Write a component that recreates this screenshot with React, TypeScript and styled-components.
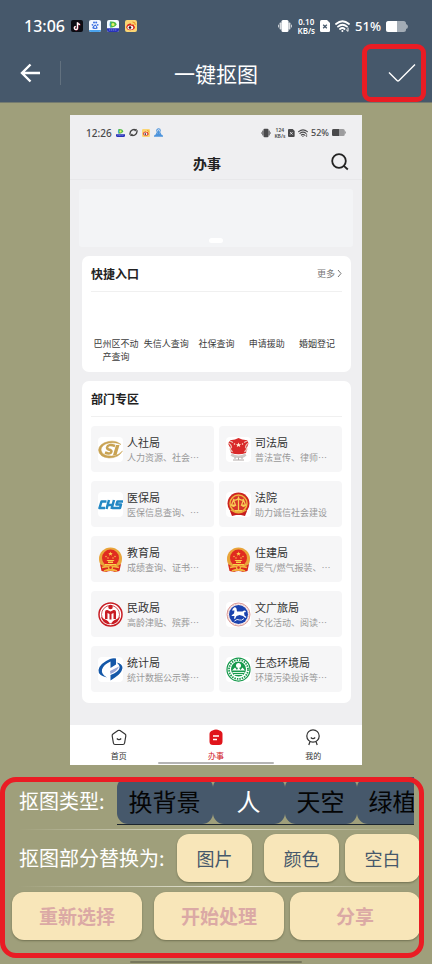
import React from "react";
import styled, { createGlobalStyle } from "styled-components";

const slate = "#46586b";
const olive = "#9f9f7b";
const cream = "#f8e6b9";
const red = "#ea1c24";

const GlobalStyle = createGlobalStyle`
  *, *::before, *::after { box-sizing: border-box; }
  body {
    margin: 0;
    background: ${olive};
    font-family: "Noto Sans CJK SC", "Noto Sans", sans-serif;
  }
  h1, h2, h3, p, ul { margin: 0; padding: 0; }
  ul { list-style: none; }
  button { font-family: inherit; border: 0; padding: 0; margin: 0; background: none; cursor: pointer; }
  svg { display: block; flex: none; }
`;

const Page = styled.div`
  min-height: 100vh;
  display: flex;
  flex-direction: column;
  background: ${olive};
  overflow: hidden;
`;

/* ---------- app header ---------- */

const Header = styled.header`
  background: ${slate};
  color: #fff;
  border-bottom: 1px solid #747b70;
`;

const StatusBar = styled.div`
  height: 44px;
  padding: 8px 24px 0 24px;
  display: flex;
  align-items: center;
  justify-content: space-between;
`;

const StatusGroup = styled.div<{ $gap: number }>`
  display: flex;
  align-items: center;
  gap: ${(p) => p.$gap}px;
`;

const Clock = styled.span<{ $small?: boolean }>`
  font-family: "Noto Sans", sans-serif;
  font-size: ${(p) => (p.$small ? 10 : 16)}px;
  line-height: ${(p) => (p.$small ? 12 : 20)}px;
  font-weight: 500;
`;

const Rate = styled.span<{ $small?: boolean }>`
  font-family: "Noto Sans", sans-serif;
  font-size: ${(p) => (p.$small ? 5 : 8)}px;
  line-height: ${(p) => (p.$small ? 6 : 9)}px;
  font-weight: 600;
  text-align: center;
  display: flex;
  flex-direction: column;
`;

const Percent = styled.span<{ $small?: boolean }>`
  font-family: "Noto Sans", sans-serif;
  font-size: ${(p) => (p.$small ? 9 : 13)}px;
  line-height: ${(p) => (p.$small ? 12 : 20)}px;
  font-weight: 500;
`;

const Toolbar = styled.div`
  height: 58px;
  display: grid;
  grid-template-columns: 61px 1fr 61px;
  align-items: center;
`;

const BackButton = styled.button`
  height: 24px;
  padding-left: 20px;
  color: #fff;
  border-right: 1px solid #62717f;
`;

const AppTitle = styled.h1`
  font-size: 21px;
  line-height: 30px;
  font-weight: 400;
  text-align: center;
`;

const Confirm = styled.div`
  position: relative;
  height: 58px;
  display: flex;
  align-items: center;
  justify-content: center;
`;

const ConfirmButton = styled.button`
  color: #fff;
`;

const ConfirmRing = styled.span`
  position: absolute;
  inset: 0 6px 0 -9px;
  border: 5px solid ${red};
  border-radius: 9px;
  pointer-events: none;
`;

/* ---------- picture being edited ---------- */

const Stage = styled.main`
  padding: 12px 70px;
`;

const Phone = styled.section`
  background: #efeff1;
  color: #222;
  display: flex;
  flex-direction: column;
`;

const PhoneStatus = styled.div`
  height: 35px;
  padding: 0 16px;
  display: flex;
  align-items: center;
  justify-content: space-between;
  color: #4a4a4c;
`;

const PhoneHeader = styled.div`
  height: 30px;
  padding: 0 11px;
  display: grid;
  grid-template-columns: 20px 1fr 20px;
  align-items: start;
  border-bottom: 1px solid #e8e8ea;
`;

const PhoneTitle = styled.h2`
  grid-column: 2;
  padding-right: 18px;
  font-size: 14px;
  line-height: 26px;
  font-weight: 700;
  text-align: center;
`;

const SearchButton = styled.button`
  color: #222;
`;

const Banner = styled.div`
  height: 58px;
  margin: 9px 9px 0;
  padding-bottom: 4px;
  border-radius: 3px;
  background: #f3f4f6;
  display: flex;
  align-items: flex-end;
  justify-content: center;
`;

const BannerDot = styled.span`
  width: 14px;
  height: 5px;
  border-radius: 3px;
  background: #fff;
`;

const Card = styled.section`
  margin: 9px 11px 0 12px;
  padding: 0 9px;
  border-radius: 7px;
  background: #fff;
`;

const CardHead = styled.div`
  height: 36px;
  display: flex;
  align-items: center;
  justify-content: space-between;
  border-bottom: 1px solid #f0f0f0;
`;

const CardTitle = styled.h3`
  font-size: 12px;
  line-height: 18px;
  font-weight: 700;
`;

const More = styled.a`
  display: flex;
  align-items: center;
  gap: 2px;
  font-size: 9px;
  line-height: 14px;
  color: #777;
  text-decoration: none;
`;

const Shortcuts = styled.ul`
  display: grid;
  grid-template-columns: repeat(5, 1fr);
  padding: 45px 0 9px;
  font-size: 9px;
  line-height: 13px;
  color: #3c3c3c;
  text-align: center;
`;

const Departments = styled.ul`
  display: grid;
  grid-template-columns: 1fr 1fr;
  gap: 9px 5px;
  padding: 9px 0 11px;
`;

const Department = styled.li`
  height: 46px;
  padding: 0 7px;
  border-radius: 4px;
  background: #f6f6f7;
  display: flex;
  align-items: center;
  gap: 4px;
  overflow: hidden;
  white-space: nowrap;
`;

const DepartmentName = styled.p`
  font-size: 11px;
  line-height: 16px;
  color: #333;
`;

const DepartmentNote = styled.p`
  font-size: 9px;
  line-height: 15px;
  color: #999;
`;

const TabBar = styled.nav`
  margin-top: 22px;
  padding-top: 4px;
  background: #fff;
  display: grid;
  grid-template-columns: repeat(3, 1fr);
`;

const TabItem = styled.button<{ $active?: boolean }>`
  display: flex;
  flex-direction: column;
  align-items: center;
  gap: 4px;
  font-size: 8px;
  line-height: 11px;
  color: ${(p) => (p.$active ? "#d0161c" : "#333")};
`;

const PhoneFoot = styled.div`
  padding: 1px 0;
  background: #fff;
  display: flex;
  justify-content: center;
`;

const HomeBar = styled.span<{ $tone: string }>`
  width: 40%;
  height: 2px;
  border-radius: 1px;
  background: ${(p) => p.$tone};
`;

/* ---------- bottom controls ---------- */

const Panel = styled.section`
  position: relative;
  padding-bottom: 18px;
`;

const PanelRing = styled.span`
  position: absolute;
  inset: 0 8px 0 0;
  border: 5px solid ${red};
  border-radius: 16px;
  pointer-events: none;
`;

const TypeRow = styled.div`
  display: flex;
  align-items: center;
  padding: 0 18px 0 19px;
`;

const RowLabel = styled.span`
  flex: none;
  font-size: 20px;
  line-height: 30px;
  color: #fff;
`;

const TypeTabs = styled.div`
  flex: 1;
  min-width: 0;
  margin-left: 12px;
  display: flex;
  overflow: hidden;
  border-bottom: 1px solid #1c252e;
`;

const TypeTab = styled.button<{ $active?: boolean }>`
  flex: none;
  min-width: 72px;
  height: 47px;
  padding: 0 12px;
  border-radius: 11px;
  background: ${slate};
  font-size: 24px;
  line-height: 36px;
  color: ${(p) => (p.$active ? "#fff" : "#050505")};
`;

const Rule = styled.hr`
  width: calc(100% - 36px);
  height: 1px;
  margin: 4px 18px;
  border: 0;
  background: linear-gradient(90deg, transparent, #e4e4d4 50%, transparent);
`;

const ReplaceRow = styled.div`
  display: flex;
  align-items: center;
  padding: 0 12px 0 19px;

  ${RowLabel} { flex: 1; }
`;

const CreamButton = styled.button`
  width: 75px;
  height: 48px;
  margin-left: 12px;
  border-radius: 12px;
  background: ${cream};
  box-shadow: 0 1px 2px rgba(60, 60, 30, 0.45);
  font-size: 18px;
  line-height: 28px;
  color: ${slate};

  &:last-child { margin-left: 6px; }
`;

const ActionRow = styled.div`
  display: flex;
  margin-top: 5px;
  padding: 0 12px 0 0;
`;

const ActionButton = styled(CreamButton)`
  flex: 1;
  font-size: 19px;
  font-weight: 700;
  color: #dba9a5;
`;

const PageFoot = styled.div`
  padding-top: 3px;
  display: flex;
  justify-content: center;
`;

/* ---------- status icons ---------- */

const Vibrate = ({ w }: { w: number }) => (
  <svg width={w} height={w} viewBox="0 0 14 14" fill="currentColor">
    <rect x="3.500" y="1" width="7" height="12" rx="1.500" />
    <rect x="1.600" y="3.600" width="1.900" height="6.800" rx=".6" opacity=".8" />
    <rect x="10.500" y="3.600" width="1.900" height="6.800" rx=".6" opacity=".8" />
    <rect x="0" y="5.500" width="1" height="3" rx=".5" opacity=".7" />
    <rect x="13" y="5.500" width="1" height="3" rx=".5" opacity=".7" />
  </svg>
);

const Sim = ({ h, cut }: { h: number; cut: string }) => (
  <svg width={(h * 10) / 12} height={h} viewBox="0 0 10 12">
    <path d="M1.500 0H7L10 3V10.500Q10 12 8.500 12H1.500Q0 12 0 10.500V1.500Q0 0 1.500 0Z" fill="currentColor" />
    <path d="M3.200 4.700L6.800 8.300M6.800 4.700L3.200 8.300" stroke={cut} strokeWidth="1.300" />
  </svg>
);

const Wifi = ({ w }: { w: number }) => (
  <svg width={w} height={(w * 12) / 15} viewBox="0 0 15 12" fill="none" stroke="currentColor" strokeWidth="1.800" strokeLinecap="round">
    <path d="M1 4Q7.500 -1.600 14 4M3 6.600Q7.500 2.900 12 6.600M5 9Q7.500 7 9.600 9" />
    <circle cx="7.400" cy="11" r="1" fill="currentColor" stroke="none" />
    <path d="M13 8V11M11.400 10L12.600 11" strokeWidth="1" />
  </svg>
);

const Battery = ({ w }: { w: number }) => (
  <svg width={w} height={w / 2} viewBox="0 0 22 11">
    <rect width="20" height="11" rx="2.500" fill="currentColor" opacity=".5" />
    <path d="M2.500 0H11V11H2.500Q0 11 0 8.500V2.500Q0 0 2.500 0Z" fill="currentColor" />
    <path d="M20 3Q22 3.500 22 5.500T20 8Z" fill="currentColor" opacity=".5" />
  </svg>
);

const NoteApp = () => (
  <svg width="12" height="12" viewBox="0 0 12 12">
    <rect width="12" height="12" rx="2" fill="#0b0b12" />
    <path d="M6.400 2.200V7.900A1.600 1.600 0 1 1 4.700 6.300M6.400 2.400Q7 4.300 9 4.500" fill="none" stroke="#ef4a6a" strokeWidth="1.300" transform="translate(.4 .3)" />
    <path d="M6.400 2.200V7.900A1.600 1.600 0 1 1 4.700 6.300M6.400 2.400Q7 4.300 9 4.500" fill="none" stroke="#fff" strokeWidth="1.300" />
  </svg>
);

const PawApp = () => (
  <svg width="12" height="12" viewBox="0 0 12 12">
    <rect width="12" height="12" rx="2" fill="#f2f7ff" />
    <g fill="#3c6fe0">
      <circle cx="3.500" cy="4.800" r=".9" />
      <circle cx="5" cy="2.600" r="1" />
      <circle cx="7.200" cy="2.600" r="1" />
      <circle cx="8.700" cy="4.800" r=".9" />
      <path d="M6 4.500Q7 4.500 7.700 5.900T8.800 8Q8.500 9 6 9T3.300 8Q3.400 7 4.300 6T6 4.500Z" />
    </g>
    <circle cx="6.100" cy="7" r="1" fill="#fff" />
    <path d="M0 10H12Q12 12 10 12H2Q0 12 0 10Z" fill="#4aa3ee" />
  </svg>
);

const PlayApp = ({ w, bare }: { w: number; bare?: boolean }) => (
  <svg width={w} height={w} viewBox="0 0 12 12">
    {!bare && <rect width="12" height="12" rx="2" fill="#f5fbff" />}
    <path d="M3 1.500Q9 1 9.500 4.200Q9.200 7 3.300 7.800Z" fill="#4dba45" />
    <path d="M3 1.500Q4.500 4 3.300 7.800Q2 5 3 1.500Z" fill="#1c9be8" />
    <circle cx="6" cy="4.500" r="1.500" fill="#e8f06a" />
    <path d="M0 8.300H12V10Q12 12 10 12H2Q0 12 0 10Z" fill="#2832b8" />
    <path d="M2 10H10" stroke="#8c9cf0" strokeWidth=".8" strokeDasharray="1.300 .6" />
  </svg>
);

const EyeApp = ({ w }: { w: number }) => (
  <svg width={w} height={w} viewBox="0 0 12 12">
    <rect width="12" height="12" rx="2" fill="#fbd573" />
    <path d="M1.200 7.200Q2 4 5 3.600Q6.500 3.500 6.300 4.700Q9.500 4 9 6Q10.500 6.600 9.800 8.200Q8.500 10.200 5.200 10.200T1.200 7.200Z" fill="#d8261c" />
    <ellipse cx="5.300" cy="7.400" rx="2.900" ry="2" fill="#fff" />
    <circle cx="5" cy="7.500" r="1.300" fill="#1b1210" />
    <path d="M7.500 2Q10.500 1.800 10.300 5" fill="none" stroke="#f08a1c" strokeWidth="1" />
  </svg>
);

const LoopApp = () => (
  <svg width="9" height="9" viewBox="0 0 12 12" fill="none" stroke="#444" strokeWidth="1.800">
    <path d="M1.500 9Q.5 4.500 4.500 2.500Q7 1.500 8.500 2.500M10.500 3Q11.500 7.500 7.500 9.500Q5 10.500 3.500 9.500M2 10.500L4.500 8M10 1.500L7.500 4" />
  </svg>
);

const CloudApp = () => (
  <svg width="9" height="9" viewBox="0 0 12 12" fill="none" stroke="#4d94dc" strokeWidth="1.400">
    <circle cx="6" cy="3.400" r="2.400" />
    <path d="M4 6.500H8L9 8.500H3ZM6 3V8M.5 10.800Q2 8.800 3.500 9.500H8.500Q10 8.800 11.500 10.800Z" />
  </svg>
);

/* ---------- department emblems ---------- */

const Emblem = ({ children, plain }: { children: React.ReactNode; plain?: boolean }) => (
  <svg width="25" height="25" viewBox="0 0 50 50">
    {!plain && <rect width="50" height="50" rx="8" fill="#fff" />}
    {children}
  </svg>
);

const SocialSecurity = () => (
  <Emblem>
    <path d="M46 15Q36 6 21 9Q2 13 1 26Q2 40 22 42Q41 42 49 28Q42 37 27 38Q8 38 6 26Q7 15 22 12Q37 10 46 15Z" fill="#c9a353" stroke="#c9a353" />
    <path d="M34 18Q20 13 18 21Q18 25 25 26Q29 28 25 32Q21 34 14 31" fill="none" stroke="#c9a353" strokeWidth="5" />
    <path d="M36 16H43L37 36H30Z" fill="#c9a353" />
  </Emblem>
);

const HealthInsurance = () => (
  <Emblem>
    <g fill="none" stroke="#2388c4" strokeWidth="5" strokeLinejoin="round">
      <path d="M17 19H7L3 32H14M22 16L17 34M32 16L27 34M19 26H30M50 19H39L37 25H46L44 32H29" />
    </g>
  </Emblem>
);

const Justice = () => (
  <Emblem>
    <path d="M9 6Q16 7 25 2Q34 7 42 6L45 13L42 21L40 32Q25 37 10 32L8 21L4 13Z" fill="#d92a2a" />
    <path d="M4 12Q10 14 11 20L8 24L13 30M46 12Q40 14 39 20L42 24L37 30M8 8L14 11M42 8L36 11" fill="none" stroke="#edc3b8" strokeWidth="2.500" />
    <path d="M25 11L26.500 14.500H30L27.500 17L28.500 20L25 18L21.500 20L22.500 17L20 14.500H23.500Z" fill="#fff0d8" />
    <circle cx="17" cy="14" r="1.500" fill="#fff0d8" />
    <circle cx="33" cy="14" r="1.500" fill="#fff0d8" />
    <path d="M12 33Q18 37 25 37T38 33L41 37Q36 43 25 42T9 37Z" fill="#cfc9c6" />
    <path d="M14 46H36M18 40V44M25 41V46M32 40V44" stroke="#b1aaa8" strokeWidth="2" />
  </Emblem>
);

const Court = () => (
  <Emblem>
    <path d="M8 38L12 48L20 46H30L38 48L42 38Z" fill="#c51c1e" />
    <circle cx="25" cy="23" r="22" fill="#cc2420" />
    <circle cx="25" cy="23" r="17" fill="#d7352a" stroke="#f0b541" strokeWidth="3" />
    <path d="M25 9V36M14 15Q20 18 25 13Q30 18 36 15M15 16L11 26H19ZM35 16L31 26H39ZM18 37H32" fill="none" stroke="#f7cd56" strokeWidth="2.500" />
    <path d="M10 26H20Q18 30 15 30T10 26ZM30 26H40Q38 30 35 30T30 26Z" fill="#f7cd56" />
    <path d="M10 36Q25 47 40 36" fill="none" stroke="#e9ad3c" strokeWidth="2.500" />
  </Emblem>
);

const National = () => (
  <Emblem plain>
    <circle cx="25" cy="24" r="23" fill="#e9a53a" />
    <circle cx="25" cy="22" r="17" fill="#e02b20" />
    <path d="M25 9L26 12H29.500L27 14L28 17.500L25 15.500L22 17.500L23 14L20.500 12H24Z" fill="#fbd24c" />
    <g fill="#fbd24c">
      <circle cx="16" cy="19" r="1.400" />
      <circle cx="20" cy="22" r="1.300" />
      <circle cx="30" cy="22" r="1.300" />
      <circle cx="34" cy="19" r="1.400" />
      <path d="M19 26H31L33 28H17ZM20 29H30V32H20ZM14 34H36V36H14Z" />
    </g>
    <path d="M4 34Q12 41 25 37Q38 41 46 34L43 48L34 50Q25 46 16 50L7 48Z" fill="#d9291d" />
    <path d="M8 41Q25 36 42 41M12 48Q25 43 38 48" fill="none" stroke="#f3b33e" strokeWidth="3.500" />
    <circle cx="25" cy="41" r="4" fill="#e02b20" stroke="#f3b33e" strokeWidth="2.500" />
  </Emblem>
);

const CivilAffairs = () => (
  <Emblem plain>
    <circle cx="25" cy="25" r="23" fill="#fff" stroke="#c81d24" strokeWidth="3" />
    <circle cx="25" cy="25" r="18" fill="#fff" stroke="#c81d24" strokeWidth="1.500" />
    <circle cx="25" cy="10" r="4.500" fill="#c81d24" />
    <path d="M14 34V20Q14 15 19 16L25 19L31 16Q36 15 36 20V34H31V22L27 24V35H23V24L19 22V34Z" fill="#c81d24" />
    <path d="M6 29Q8 42 23 45Q23 37 12 34ZM44 29Q42 42 27 45Q27 37 38 34Z" fill="#c81d24" />
  </Emblem>
);

const Tourism = () => (
  <Emblem>
    <circle cx="25" cy="25" r="23" fill="#fff4f1" stroke="#d99a98" strokeWidth="2" />
    <circle cx="25" cy="25" r="21" fill="none" stroke="#dfaaa7" strokeWidth="2" strokeDasharray="1.500 2" />
    <circle cx="25" cy="25" r="19" fill="#1b43ae" />
    <path d="M12 17Q13 12 18 10L21 13L22 19L33 19Q38 15 40 20L36 21L37 27L41 30L39 32L34 28L27 26L21 28L18 34L16 33L17 28L11 28L12 26L16 23L17 17Z" fill="#fff" />
    <path d="M17 38Q22 33 27 36Q31 38 36 33" fill="none" stroke="#fff" strokeWidth="1.800" />
  </Emblem>
);

const Statistics = () => (
  <Emblem>
    <path d="M24 4Q3 13 1 26Q0 37 18 41Q6 34 8 25Q11 15 25 9V22L36 15V3Q30 2 24 4Z" fill="#1558a8" />
    <path d="M37 11Q49 13 49 22Q47 33 34 41L25 47V36Q41 30 43 22Q44 16 37 11Z" fill="#1558a8" />
    <path d="M24 28L42 19Q38 29 25 34Z" fill="#9aa6d6" />
  </Emblem>
);

const Ecology = () => (
  <Emblem>
    <circle cx="25" cy="25" r="23" fill="#fff" stroke="#16994c" strokeWidth="2.500" />
    <circle cx="25" cy="25" r="19" fill="none" stroke="#16994c" strokeWidth="3.500" strokeDasharray="3 2" />
    <circle cx="25" cy="24" r="15" fill="#16994c" />
    <circle cx="25" cy="17" r="5" fill="#fff" />
    <path d="M12 27L18 21L22 26L25 20L29 26L33 21L38 27Z" fill="#fff" />
    <path d="M13 31H37M16 35H34" stroke="#d8f4e2" strokeWidth="2" />
  </Emblem>
);

/* ---------- data ---------- */

const shortcuts = ["巴州区不动产查询", "失信人查询", "社保查询", "申请援助", "婚姻登记"];

const departments = [
  { name: "人社局", note: "人力资源、社会…", Icon: SocialSecurity },
  { name: "司法局", note: "普法宣传、律师…", Icon: Justice },
  { name: "医保局", note: "医保信息查询、…", Icon: HealthInsurance },
  { name: "法院", note: "助力诚信社会建设", Icon: Court },
  { name: "教育局", note: "成绩查询、证书…", Icon: National },
  { name: "住建局", note: "暖气/燃气报装、…", Icon: National },
  { name: "民政局", note: "高龄津贴、殡葬…", Icon: CivilAffairs },
  { name: "文广旅局", note: "文化活动、阅读…", Icon: Tourism },
  { name: "统计局", note: "统计数据公示等…", Icon: Statistics },
  { name: "生态环境局", note: "环境污染投诉等…", Icon: Ecology },
];

const types = ["换背景", "人", "天空", "绿植"];

export default function App() {
  const [type, setType] = React.useState("人");

  return (
    <Page>
      <GlobalStyle />
      <Header>
        <StatusBar>
          <StatusGroup $gap={6}>
            <Clock>13:06</Clock>
            <NoteApp />
            <PawApp />
            <PlayApp w={12} />
            <EyeApp w={12} />
          </StatusGroup>
          <StatusGroup $gap={5}>
            <Vibrate w={14} />
            <Rate>
              <span>0.10</span>
              <span>KB/s</span>
            </Rate>
            <Sim h={12} cut={slate} />
            <Wifi w={15} />
            <Percent>51%</Percent>
            <Battery w={22} />
          </StatusGroup>
        </StatusBar>
        <Toolbar>
          <BackButton aria-label="返回">
            <svg width="20" height="20" viewBox="0 0 20 20" fill="none" stroke="currentColor" strokeWidth="2.400">
              <path d="M20 10H2M10.500 1.500L2 10L10.500 18.500" />
            </svg>
          </BackButton>
          <AppTitle>一键抠图</AppTitle>
          <Confirm>
            <ConfirmButton aria-label="完成">
              <svg width="28" height="20" viewBox="0 0 28 20" fill="none" stroke="currentColor" strokeWidth="1.400">
                <path d="M1 9.500L9 17.500Q10 18.500 11 17.500L27 1.500" />
              </svg>
            </ConfirmButton>
            <ConfirmRing />
          </Confirm>
        </Toolbar>
      </Header>

      <Stage>
        <Phone>
          <PhoneStatus>
            <StatusGroup $gap={4}>
              <Clock $small>12:26</Clock>
              <PlayApp w={9} bare />
              <LoopApp />
              <EyeApp w={8} />
              <CloudApp />
            </StatusGroup>
            <StatusGroup $gap={3}>
              <Vibrate w={10} />
              <Rate $small>
                <span>124</span>
                <span>KB/s</span>
              </Rate>
              <Sim h={8} cut="#efeff1" />
              <Wifi w={10} />
              <Percent $small>52%</Percent>
              <Battery w={14} />
            </StatusGroup>
          </PhoneStatus>
          <PhoneHeader>
            <PhoneTitle>办事</PhoneTitle>
            <SearchButton aria-label="搜索">
              <svg width="18" height="22" viewBox="0 0 18 22" fill="none" stroke="currentColor" strokeWidth="1.800">
                <circle cx="8" cy="11" r="6.800" />
                <path d="M12.800 15.800L16.800 19.500" />
              </svg>
            </SearchButton>
          </PhoneHeader>
          <Banner>
            <BannerDot />
          </Banner>

          <Card>
            <CardHead>
              <CardTitle>快捷入口</CardTitle>
              <More href="#more">
                更多
                <svg width="5" height="9" viewBox="0 0 5 9" fill="none" stroke="currentColor">
                  <path d="M1 1L4 4.500L1 8" />
                </svg>
              </More>
            </CardHead>
            <Shortcuts>
              {shortcuts.map((s) => (
                <li key={s}>{s}</li>
              ))}
            </Shortcuts>
          </Card>

          <Card>
            <CardHead>
              <CardTitle>部门专区</CardTitle>
            </CardHead>
            <Departments>
              {departments.map(({ name, note, Icon }) => (
                <Department key={name}>
                  <Icon />
                  <div>
                    <DepartmentName>{name}</DepartmentName>
                    <DepartmentNote>{note}</DepartmentNote>
                  </div>
                </Department>
              ))}
            </Departments>
          </Card>

          <TabBar>
            <TabItem>
              <svg width="16" height="17" viewBox="0 0 16 17" fill="none" stroke="currentColor" strokeWidth="1.200">
                <path d="M7 1.600Q8 1 9 1.600L14 5Q15 5.700 14.800 7L13.600 14Q13.300 15.500 12 15.500H4Q2.700 15.500 2.400 14L1.200 7Q1 5.700 2 5ZM5.800 9.500Q8 11.800 10.200 9.500" />
              </svg>
              首页
            </TabItem>
            <TabItem $active>
              <svg width="16" height="17" viewBox="0 0 16 17">
                <path d="M4.500 1.500Q8 -.5 11.500 1.500Q14.500 2.500 14.500 5V12.500Q14.500 16 11 16H5Q1.500 16 1.500 12.500V5Q1.500 2.500 4.500 1.500Z" fill="#e0141b" />
                <path d="M5 7H11M5 10.500H9" stroke="#fff" strokeWidth="1.300" />
              </svg>
              办事
            </TabItem>
            <TabItem>
              <svg width="16" height="17" viewBox="0 0 16 17" fill="none" stroke="currentColor" strokeWidth="1.200">
                <circle cx="8" cy="7" r="6.200" />
                <path d="M5.800 8.500Q8 10.800 10.200 8.500M5 12.500L3.800 16M11 12.500L12.200 16" />
              </svg>
              我的
            </TabItem>
          </TabBar>
          <PhoneFoot>
            <HomeBar $tone="#b4b4b4" />
          </PhoneFoot>
        </Phone>
      </Stage>

      <Panel>
        <TypeRow>
          <RowLabel>抠图类型:</RowLabel>
          <TypeTabs role="tablist" aria-label="抠图类型">
            {types.map((t) => (
              <TypeTab key={t} role="tab" aria-selected={t === type} $active={t === type} onClick={() => setType(t)}>
                {t}
              </TypeTab>
            ))}
          </TypeTabs>
        </TypeRow>
        <Rule />
        <ReplaceRow>
          <RowLabel>抠图部分替换为:</RowLabel>
          <CreamButton>图片</CreamButton>
          <CreamButton>颜色</CreamButton>
          <CreamButton>空白</CreamButton>
        </ReplaceRow>
        <Rule />
        <ActionRow>
          <ActionButton>重新选择</ActionButton>
          <ActionButton>开始处理</ActionButton>
          <ActionButton>分享</ActionButton>
        </ActionRow>
        <PanelRing />
      </Panel>
      <PageFoot>
        <HomeBar $tone="#77775c" />
      </PageFoot>
    </Page>
  );
}
